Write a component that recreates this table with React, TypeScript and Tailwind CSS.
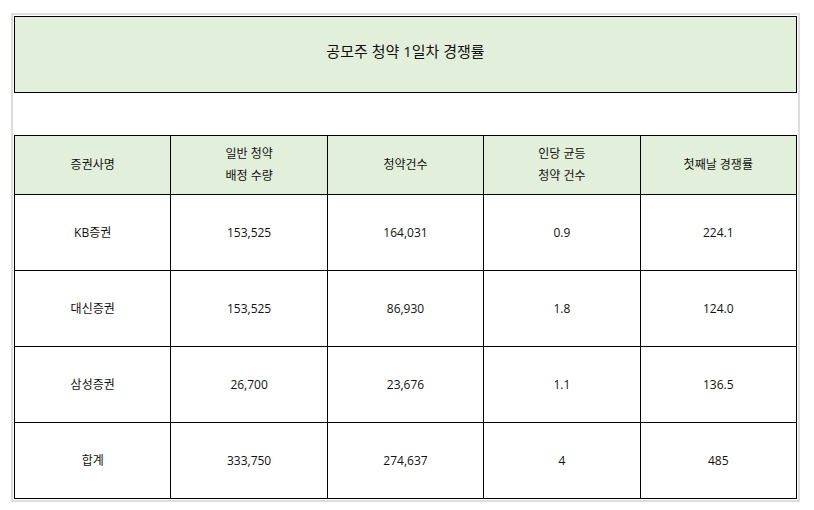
import React from 'react';

const rows = [
  ['KB증권', '153,525', '164,031', '0.9', '224.1'],
  ['대신증권', '153,525', '86,930', '1.8', '124.0'],
  ['삼성증권', '26,700', '23,676', '1.1', '136.5'],
  ['합계', '333,750', '274,637', '4', '485'],
];

export default function App() {
  return (
    <div
      className="bg-white w-[814px] h-[510px] pt-[13px] pl-[11px] text-[#111] text-[12px]"
      style={{ fontFamily: '"Open Sans", "Noto Sans CJK KR", sans-serif' }}
    >
      <div className="w-[789px] h-[489px] border-2 border-[#dddddd] p-px">
        <div className="h-[77px] border border-black bg-[#e2efda] flex items-center justify-center pb-[6px] text-[15px]">
          공모주 청약 1일차 경쟁률
        </div>

        <table className="mt-[42px] w-full border-collapse table-fixed">
          <thead>
            <tr className="h-[59px] bg-[#e2efda]">
              <th className="border border-black font-normal leading-[22px]">증권사명</th>
              <th className="border border-black font-normal leading-[22px]">
                일반 청약
                <br />
                배정 수량
              </th>
              <th className="border border-black font-normal leading-[22px]">청약건수</th>
              <th className="border border-black font-normal leading-[22px]">
                인당 균등
                <br />
                청약 건수
              </th>
              <th className="border border-black font-normal leading-[22px]">첫째날 경쟁률</th>
            </tr>
          </thead>
          <tbody>
            {rows.map((r) => (
              <tr key={r[0]} className="h-[76px]">
                {r.map((c, i) => (
                  <td key={i} className="border border-black text-center">
                    {c}
                  </td>
                ))}
              </tr>
            ))}
          </tbody>
        </table>
      </div>
    </div>
  );
}
